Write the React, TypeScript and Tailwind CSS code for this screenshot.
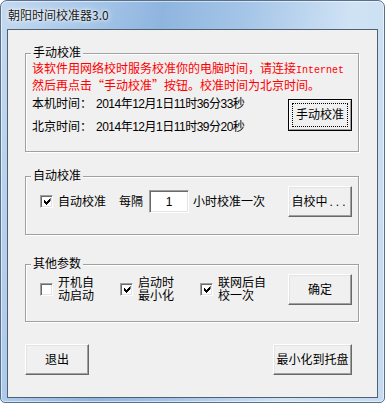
import type { ReactNode } from "react";

const btn3d =
  "border border-t-white border-l-white border-r-[#696969] border-b-[#696969] bg-[#f0f0f0] shadow-[inset_-1px_-1px_0_#a0a0a0,inset_1px_1px_0_#e3e3e3]";

// classic 7x7 tick, drawn pixel by pixel
const tick = [
  "......X",
  ".....XX",
  "X...XXX",
  "XX.XXX.",
  "XXXXX..",
  ".XXX...",
  "..X....",
];

function Checkbox({ checked }: { checked?: boolean }) {
  return (
    <span className="flex h-[13px] w-[13px] shrink-0 items-center justify-center border border-t-[#a0a0a0] border-l-[#a0a0a0] border-r-white border-b-white bg-white shadow-[inset_1px_1px_0_#696969,inset_-1px_-1px_0_#e3e3e3]">
      {checked ? (
        <svg width="7" height="7" viewBox="0 0 7 7" shapeRendering="crispEdges" className="translate-x-[0.5px]">
          {tick.flatMap((row, y) =>
            row.split("").map((c, x) => (c === "X" ? <rect key={`${x}-${y}`} x={x} y={y} width="1" height="1" fill="#000" /> : null)),
          )}
        </svg>
      ) : null}
    </span>
  );
}

function Button({ children, className }: { children: ReactNode; className: string }) {
  return (
    <button type="button" className={`${btn3d} ${className} flex shrink-0 items-center justify-center text-[12px] text-black`}>
      {children}
    </button>
  );
}

function Group({ title, className, children }: { title: string; className: string; children: ReactNode }) {
  return (
    <div className={`relative ml-[17px] w-[334px] border border-[#a0a0a0] shadow-[1px_1px_0_#fff,inset_1px_1px_0_#fff] ${className}`}>
      <span className="absolute -top-[8px] left-[5px] bg-[#f0f0f0] px-[2px] leading-[14px]">{title}</span>
      {children}
    </div>
  );
}

function Option({ label, checked }: { label: ReactNode; checked?: boolean }) {
  return (
    <div className="flex w-[80px] items-center">
      <Checkbox checked={checked} />
      <span className="ml-[5px] leading-[13px]">{label}</span>
    </div>
  );
}

export default function App() {
  return (
    <div className="h-[403px] w-[385px] overflow-hidden bg-white font-['Liberation_Sans','Noto_Sans_CJK_SC',sans-serif] text-[12px] text-black">
      <div className="flex h-[403px] w-[385px] flex-col rounded-t-[7px] rounded-b-[5px] border border-[#56708d] bg-[linear-gradient(100deg,#c4d9ef_0%,#aac8e9_18%,#8fb5df_36%,#a6c6e8_55%,#d0e3f5_78%,#c4daf0_100%)] shadow-[inset_0_0_0_1px_rgba(255,255,255,0.55)]">
        <div className="flex h-[28px] items-center pl-[7px] font-['Noto_Sans_CJK_SC',sans-serif] text-[12px] text-[#1a1a1a] [text-shadow:0_0_6px_#fff,0_0_3px_#fff]">
          朝阳时间校准器3.0
        </div>

        <div className="mx-[6px] flex h-[369px] flex-col border border-[#4f6072] bg-[#f0f0f0]">
          <Group title="手动校准" className="mt-[23px] pb-[13px]">
            <div className="pl-[6px] pt-[7px] font-['Noto_Sans_CJK_SC',sans-serif] leading-[14px] text-[#ff0000]">
              <span className="block whitespace-nowrap">
                该软件用网络校时服务校准你的电脑时间，请连接
                <span className="font-['Liberation_Mono',monospace] text-[10px]">Internet</span>
              </span>
              <span className="block whitespace-nowrap">然后再点击“手动校准”按钮。校准时间为北京时间。</span>
            </div>
            <div className="flex items-center pl-[6px] pr-[6px]">
              <div className="flex flex-col">
                <div className="flex h-[23px] items-center">
                  <span className="w-[64px]">本机时间：</span>
                  <span className="tracking-[-0.5px]">2014年12月1日11时36分33秒</span>
                </div>
                <div className="flex h-[23px] items-center">
                  <span className="w-[64px]">北京时间：</span>
                  <span className="tracking-[-0.5px]">2014年12月1日11时39分20秒</span>
                </div>
              </div>
              <button type="button" className="ml-auto h-[32px] w-[64px] border border-black bg-[#f0f0f0] text-[12px]">
                <span className="flex h-full w-full border border-t-white border-l-white border-r-[#a0a0a0] border-b-[#a0a0a0] p-[2px]">
                  <span className="flex flex-1 items-center justify-center border border-dotted border-black">手动校准</span>
                </span>
              </button>
            </div>
          </Group>

          <Group title="自动校准" className="mt-[24px] pb-[17px] pt-[9px]">
            <div className="flex items-center pl-[14px] pr-[6px]">
              <Checkbox checked />
              <span className="ml-[5px]">自动校准</span>
              <span className="ml-[13px]">每隔</span>
              <div className="ml-[6px] flex h-[23px] w-[40px] items-center justify-center border border-t-[#a0a0a0] border-l-[#a0a0a0] border-r-white border-b-white bg-white shadow-[inset_1px_1px_0_#696969,inset_-1px_-1px_0_#e3e3e3]">
                1
              </div>
              <span className="ml-[4px]">小时校准一次</span>
              <Button className="ml-auto h-[31px] w-[64px]">
                自校中<span className="pl-[2px] tracking-[3px]">...</span>
              </Button>
            </div>
          </Group>

          <Group title="其他参数" className="mt-[29px] pb-[16px] pt-[9px]">
            <div className="flex items-center pl-[14px] pr-[6px]">
              <Option label={<>开机自<br />动启动</>} />
              <Option label={<>启动时<br />最小化</>} checked />
              <Option label={<>联网后自<br />校一次</>} checked />
              <Button className="ml-auto h-[31px] w-[64px]">确定</Button>
            </div>
          </Group>

          <div className="mt-[22px] flex items-center justify-between pl-[17px] pr-[25px]">
            <Button className="h-[31px] w-[64px]">退出</Button>
            <Button className="h-[31px] w-[79px]">最小化到托盘</Button>
          </div>
        </div>
      </div>
    </div>
  );
}
